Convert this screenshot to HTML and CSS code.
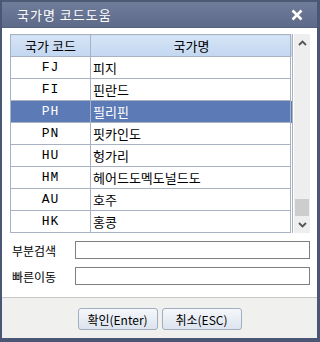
FILE: index.html
```html
<!DOCTYPE html>
<html>
  <head>
    <meta charset="utf-8">
    <title>국가명 코드도움</title>
    <link rel="stylesheet" href="styles.css">
  </head>
  <body>
    <div class="window">
      <div class="titlebar">
        <span class="title">국가명 코드도움</span>
        <span class="close">
          <svg width="12" height="12" viewBox="0 0 12 12">
            <path d="M1.5 1.5 L10.5 10.5 M10.5 1.5 L1.5 10.5" stroke="#fff" stroke-width="2.6" fill="none"/>
          </svg>
        </span>
      </div>

      <div class="content">
        <div class="grid-wrap">
          <table class="grid">
            <tr class="head">
              <th class="code">국가 코드</th>
              <th>국가명</th>
            </tr>
            <tr><td class="code">FJ</td><td>피지</td></tr>
            <tr><td class="code">FI</td><td>핀란드</td></tr>
            <tr class="selected"><td class="code">PH</td><td>필리핀</td></tr>
            <tr><td class="code">PN</td><td>핏카인도</td></tr>
            <tr><td class="code">HU</td><td>헝가리</td></tr>
            <tr><td class="code">HM</td><td>헤어드도멕도널드도</td></tr>
            <tr><td class="code">AU</td><td>호주</td></tr>
            <tr><td class="code">HK</td><td>홍콩</td></tr>
          </table>
          <div class="scrollbar">
            <div class="arrow">
              <svg width="9" height="6" viewBox="0 0 9 6"><path d="M1 5 L4.5 1.5 L8 5" stroke="#555" stroke-width="1.8" fill="none"/></svg>
            </div>
            <div class="track"></div>
            <div class="thumb"></div>
            <div class="arrow">
              <svg width="9" height="6" viewBox="0 0 9 6"><path d="M1 1 L4.5 4.5 L8 1" stroke="#555" stroke-width="1.8" fill="none"/></svg>
            </div>
          </div>
        </div>

        <div class="field">
          <label>부분검색</label>
          <input type="text">
        </div>
        <div class="field">
          <label>빠른이동</label>
          <input type="text">
        </div>
      </div>

      <div class="footer">
        <button>확인(Enter)</button>
        <button>취소(ESC)</button>
      </div>
    </div>
  </body>
</html>
```

FILE: styles.css
```css
* {
  box-sizing: border-box;
}

body {
  margin: 0;
  padding: 0;
  font-family: "Noto Sans CJK KR", "DejaVu Sans", sans-serif;
  font-size: 12px;
  color: #000;
}

.window {
  width: 320px;
  height: 342px;
  background-color: #fff;
  border-left: 2px solid #4b5674;
  border-right: 3px solid #4b5674;
  border-bottom: 4px solid #4b5674;
  display: flex;
  flex-direction: column;
}

.titlebar {
  height: 28px;
  border-top: 2px solid #4e5976;
  background: linear-gradient(#6f7c9a, #5d6a89);
  color: #fff;
  display: flex;
  align-items: center;
  justify-content: space-between;
  padding: 0 14px 0 15px;
  border-bottom: 1px solid #55617f;
}

.title {
  font-size: 13px;
  letter-spacing: 1px;
}

.close {
  display: flex;
}

.content {
  flex: 1;
  padding: 6px 7px 0 8px;
}

.grid-wrap {
  display: flex;
  gap: 1px;
}

.grid {
  width: 283px;
  border-collapse: collapse;
  border: 1px solid #a8b2c3;
  border-right: 3px double #a8b2c3;
}

.grid th,
.grid td {
  height: 22px;
  padding: 0 0 0 2px;
  border: 1px solid #a8b2c3;
  text-align: left;
  font-weight: normal;
  font-size: 13px;
  line-height: 20px;
}

.grid .head th {
  background: linear-gradient(#d6e4f6, #c3d7f1);
  text-align: center;
}

.grid .code {
  width: 80px;
  text-align: center;
  padding: 0;
}

.grid td.code {
  font-family: "Liberation Mono", monospace;
  font-size: 13px;
  letter-spacing: 1px;
}

.grid .selected td {
  background-color: #5b7ab6;
  color: #fff;
}

.scrollbar {
  width: 16px;
  background-color: #eeeeee;
  display: flex;
  flex-direction: column;
}

.arrow {
  height: 17px;
  display: flex;
  align-items: center;
  justify-content: center;
}

.track {
  flex: 1;
}

.thumb {
  height: 17px;
  margin: 0 1px;
  background-color: #cdcdcd;
}

.field {
  display: flex;
  align-items: center;
  margin-top: 8px;
}

.field:first-of-type {
  margin-top: 11px;
}

.field label {
  width: 65px;
  padding-left: 2px;
  font-size: 12px;
}

.field input {
  width: 235px;
  height: 18px;
  border: 1px solid #7f7f7f;
  padding: 0 3px;
}

.footer {
  height: 41px;
  border-top: 1px solid #c8c8c8;
  background-color: #f0f0ee;
  display: flex;
  justify-content: center;
  align-items: flex-start;
  gap: 4px;
  padding-top: 10px;
}

.footer button {
  width: 80px;
  height: 22px;
  border: 1px solid #a3adc0;
  border-radius: 3px;
  background: linear-gradient(#f4f7fb, #dde4ee);
  font-family: "Noto Sans CJK KR", "DejaVu Sans", sans-serif;
  font-size: 12px;
  padding: 0;
  color: #000;
}
```
